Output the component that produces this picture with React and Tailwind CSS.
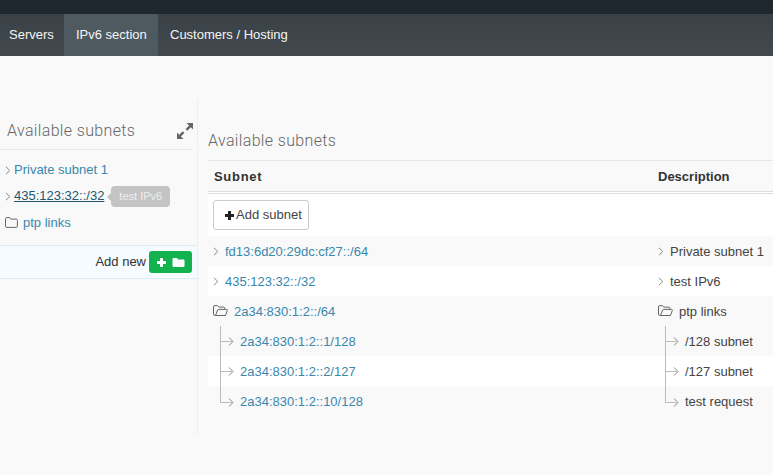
const sans = { fontFamily: '"Liberation Sans", Arial, sans-serif' };
const thin = { fontFamily: 'Roboto, sans-serif' };

function Chevron({ className = "" }) {
  return (
    <svg width="6" height="9" viewBox="0 0 6 9" className={"shrink-0 " + className} fill="none" stroke="#888" strokeWidth="1">
      <path d="M1 .8 4.8 4.5 1 8.2" />
    </svg>
  );
}

function Folder({ open }) {
  return open ? (
    <svg width="15" height="12" viewBox="0 0 15 12" className="shrink-0" fill="none" stroke="#666" strokeWidth="1">
      <path d="M2.500 10.500H1.900a1.400 1.400 0 0 1-1.400-1.400V2a1.400 1.400 0 0 1 1.400-1.400h2.600l1.300 1.500h4.800a1.200 1.200 0 0 1 1.200 1.200v1.200" />
      <path d="M2.500 10.500 4.600 5a1 1 0 0 1 .9-.6h8.200c.5 0 .8.5.6 1l-1.800 5.100H2.500Z" />
    </svg>
  ) : (
    <svg width="13" height="11" viewBox="0 0 13 11" className="shrink-0" fill="none" stroke="#666" strokeWidth="1">
      <path d="M1.800.6h2.800l1.300 1.500h5.300c.6 0 1.200.5 1.200 1.200v5.900c0 .7-.6 1.200-1.200 1.200H1.800C1.100 10.400.5 9.900.5 9.200V1.800C.5 1.100 1.100.6 1.800.6Z" />
    </svg>
  );
}

function Branch({ last }) {
  return (
    <svg width="20" height="30" viewBox="0 0 20 30" className="shrink-0" fill="none" stroke="#bbb" strokeWidth="1">
      <path d={last ? "M.5 0V16.500H12" : "M.5 0V30M.5 15.500H12"} />
      <path d={last ? "M9 12.500 13 16.500 9 20.500" : "M9 11.500 13 15.500 9 19.500"} stroke="#888" />
    </svg>
  );
}

const rows = [
  { kind: "top", a: "fd13:6d20:29dc:cf27::/64", d: "Private subnet 1", bg: "bg-[#f9f9f9]" },
  { kind: "top", a: "435:123:32::/32", d: "test IPv6", bg: "bg-white" },
  { kind: "open", a: "2a34:830:1:2::/64", d: "ptp links", bg: "bg-[#f9f9f9]" },
  { kind: "child", a: "2a34:830:1:2::1/128", d: "/128 subnet", bg: "bg-[#f9f9f9]" },
  { kind: "child", a: "2a34:830:1:2::2/127", d: "/127 subnet", bg: "bg-white" },
  { kind: "last", a: "2a34:830:1:2::10/128", d: "test request", bg: "bg-[#f9f9f9]" },
];

function Cell({ kind, text, link, indent, childIndent }) {
  const tc = link ? "text-[#3a87ad]" : "text-[#444]";
  if (kind === "top")
    return (
      <div className={"flex items-center h-full " + indent}>
        <Chevron />
        <span className={"ml-[6px] pt-[2px] whitespace-nowrap " + tc}>{text}</span>
      </div>
    );
  if (kind === "open")
    return (
      <div className={"flex items-center h-full " + indent}>
        <Folder open />
        <span className={"ml-[6px] pt-[2px] whitespace-nowrap " + tc}>{text}</span>
      </div>
    );
  return (
    <div className={"flex items-center h-full " + childIndent}>
      <Branch last={kind === "last"} />
      <span className={"pt-[2px] whitespace-nowrap " + tc}>{text}</span>
    </div>
  );
}

export default function App() {
  return (
    <div className="w-[773px] h-[475px] overflow-hidden bg-[#f9f9f9] text-[13px]" style={sans}>
      <div className="h-[14px] bg-[#1f282e]" />
      <nav className="h-[42px] flex bg-gradient-to-b from-[#3a4248] to-[#41494d] text-[#f5f5f5] whitespace-nowrap">
        <a className="px-[9px] w-[64px] flex items-center">Servers</a>
        <a className="w-[94px] px-[12px] flex items-center bg-[#4f5a60]">IPv6 section</a>
        <a className="px-[12px] flex items-center">Customers / Hosting</a>
      </nav>

      <div className="flex pt-[44px]">
        <aside className="w-[198px] h-[335px] shrink-0 border-r border-[#eeeeee]">
          <div className="w-[193px] h-[50px] border-b border-[#e8e8e8] flex items-end justify-between pl-[7px] pb-[6px]">
            <h3 className="text-[16px] font-light text-[#666] tracking-[0.35px] leading-[24px]" style={thin}>
              Available subnets
            </h3>
            <svg width="16" height="16" viewBox="0 0 16 16" className="mb-[4px]" fill="#666">
              <path d="M16 0v6.500l-2.200-2.200-3.500 3.500-1.700-1.700 3.500-3.500L9.500 0H16ZM0 16V9.500l2.200 2.200 3.500-3.500 1.700 1.700-3.500 3.500L6.500 16H0Z" />
            </svg>
          </div>
          <ul className="pt-[7px]">
            <li className="h-[26px] flex items-center pl-[5px]">
              <Chevron />
              <span className="ml-[3px] text-[#3a87ad]">Private subnet 1</span>
            </li>
            <li className="h-[26px] flex items-center pl-[5px]">
              <Chevron />
              <span className="ml-[3px] text-[#23576f] underline">435:123:32::/32</span>
              <span className="relative ml-[7px] h-[21px] px-[8px] rounded-[4px] bg-[#c4c4c4] text-[#eeeeee] text-[11px] leading-[21px] whitespace-nowrap">
                <span className="absolute left-[-4px] top-[6px] border-y-[5px] border-r-[5px] border-y-transparent border-r-[#c4c4c4]" />
                test IPv6
              </span>
            </li>
            <li className="h-[26px] flex items-center pl-[5px] pt-[1px]">
              <Folder />
              <span className="ml-[5px] text-[#3a87ad]">ptp links</span>
            </li>
          </ul>
          <div className="mt-[10px] h-[34px] bg-[#f5fbfe] border-y border-[#d9edf7] flex items-center justify-end pr-[5px] text-[#333]">
            <span className="mr-[3px]">Add new</span>
            <div className="w-[43px] h-[22px] rounded-[3px] bg-[#12b24f] flex items-center justify-around px-[4px]">
              <svg width="11" height="11" viewBox="0 0 11 11" fill="#fff"><path d="M4 1h3v3h3v3H7v3H4V7H1V4h3Z" /></svg>
              <svg width="13" height="11" viewBox="0 0 13 11" fill="#fff"><path d="M1.500 1h3.500l1 1.500h5.500c.5 0 1 .5 1 1V9c0 .5-.5 1-1 1h-10c-.5 0-1-.5-1-1V2c0-.5.5-1 1-1Z" /></svg>
            </div>
          </div>
        </aside>

        <main className="flex-1 min-w-0 pl-[10px]">
          <h3 className="h-[60px] pt-[29px] text-[16px] font-light text-[#666] tracking-[0.35px] leading-[24px]" style={thin}>
            Available subnets
          </h3>
          <div className="border-t border-[#e5e5e5] h-[31px] flex items-center font-bold text-[#333]">
            <div className="w-[444px] pl-[6px] pt-[2px] tracking-[0.7px]">Subnet</div>
            <div className="pl-[6px] pt-[2px]">Description</div>
          </div>
          <div className="border-y border-[#dddddd] h-[3px] bg-white" />
          <div className="h-[42px] bg-white pt-[6px] pl-[5px]">
            <button className="w-[96px] h-[30px] border border-[#cccccc] rounded-[3px] bg-white flex items-center justify-start pl-[11px] text-[#444] whitespace-nowrap">
              <svg width="9" height="9" viewBox="0 0 9 9" fill="#222" className="mr-[2px]"><path d="M3 0h3v3h3v3H6v3H3V6H0V3h3Z" /></svg>
              Add subnet
            </button>
          </div>
          {rows.map((r) => (
            <div key={r.a} className={"h-[30px] flex " + r.bg}>
              <div className="w-[444px]">
                <Cell kind={r.kind} text={r.a} link indent="pl-[5px]" childIndent="pl-[12px]" />
              </div>
              <div className="flex-1">
                <Cell kind={r.kind} text={r.d} indent="pl-[6px]" childIndent="pl-[13px]" />
              </div>
            </div>
          ))}
        </main>
      </div>
    </div>
  );
}
